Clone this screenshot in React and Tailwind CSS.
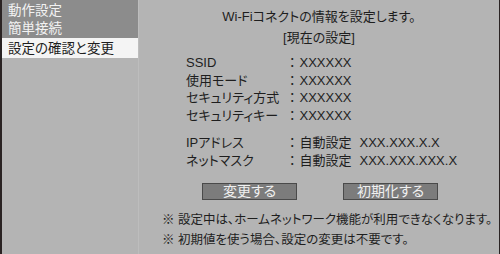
import React from "react";

const menuItems = [
  { label: "動作設定", cls: "h-[19px] pt-[3px] bg-[#8c8c8c] text-[#f2f2f2]" },
  { label: "簡単接続", cls: "h-[19px] pt-[2px] bg-[#8c8c8c] text-[#f2f2f2]" },
  { label: "設定の確認と変更", cls: "h-[20px] pt-[3px] bg-[#f4f4f4] text-[#1e1e1e]" },
];

const rows = [
  { label: "SSID", value: "XXXXXX" },
  { label: "使用モード", value: "XXXXXX" },
  { label: "セキュリティ方式", value: "XXXXXX" },
  { label: "セキュリティキー", value: "XXXXXX" },
];

const netRows = [
  { label: "IPアドレス", value: "XXX.XXX.X.X" },
  { label: "ネットマスク", value: "XXX.XXX.XXX.X" },
];

const App = () => {
  return (
    <div className="w-[500px] h-[254px] flex bg-[#b4b4b4] border-l-2 border-r border-[#2a2323] text-[#1e1e1e] font-['Liberation_Sans','Noto_Sans_CJK_JP',sans-serif] [font-feature-settings:'palt'] overflow-hidden">
      {/* left menu */}
      <div className="w-[137px] flex flex-col border-r border-[#bdbdbd]">
        {menuItems.map((item) => (
          <div
            key={item.label}
            className={`${item.cls} pl-[6px] text-[13.5px] leading-[16px]`}
          >
            {item.label}
          </div>
        ))}
      </div>

      {/* main content */}
      <div className="flex-1 flex flex-col text-[13px]">
        <div className="mt-[8px] h-[18px] leading-[18px] text-center">
          Wi-Fiコネクトの情報を設定します。
        </div>
        <div className="mt-[3px] h-[18px] leading-[18px] text-center">
          [現在の設定]
        </div>

        <div className="mt-[7px] ml-[47px] grid grid-cols-[103px_1fr] leading-[17.7px]">
          {rows.map((r) => (
            <React.Fragment key={r.label}>
              <div>{r.label}</div>
              <div>
                <span className="mr-[4px]">：</span>
                {r.value}
              </div>
            </React.Fragment>
          ))}
        </div>

        <div className="mt-[9px] ml-[47px] grid grid-cols-[103px_1fr] leading-[18px]">
          {netRows.map((r) => (
            <React.Fragment key={r.label}>
              <div>{r.label}</div>
              <div className="flex">
                <span className="mr-[4px]">：</span>
                <span className="w-[60px]">自動設定</span>
                <span>{r.value}</span>
              </div>
            </React.Fragment>
          ))}
        </div>

        <div className="mt-[13px] flex gap-[46px] ml-[63px]">
          <button className="w-[95px] h-[17px] bg-[#7c7c7c] border border-[#4a4a4a] text-[#f0f0f0] text-[14px] leading-[15px]">
            変更する
          </button>
          <button className="w-[95px] h-[17px] bg-[#7c7c7c] border border-[#4a4a4a] text-[#f0f0f0] text-[14px] leading-[15px]">
            初期化する
          </button>
        </div>

        <div className="mt-[10px] ml-[23px] text-[12.5px] leading-[20px]">
          <div>※ 設定中は、ホームネットワーク機能が利用できなくなります。</div>
          <div>※ 初期値を使う場合、設定の変更は不要です。</div>
        </div>
      </div>
    </div>
  );
};

export default App;
